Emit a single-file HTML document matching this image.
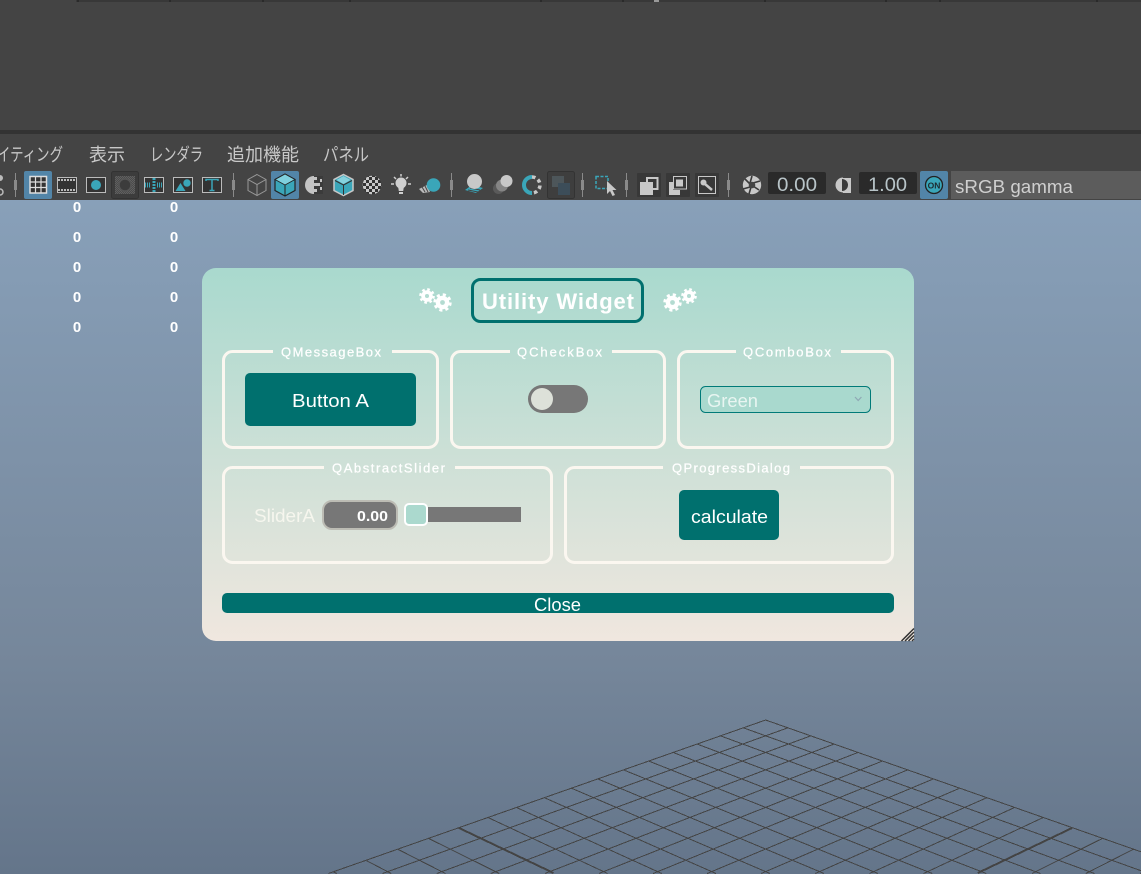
<!DOCTYPE html>
<html lang="ja">
<head>
<meta charset="utf-8">
<title>Utility Widget</title>
<style>
html,body{margin:0;padding:0;width:1141px;height:874px;overflow:hidden;background:#444}
svg{display:block;position:absolute;left:0;top:0}
text{font-family:"Liberation Sans","Noto Sans CJK JP",sans-serif}
</style>
</head>
<body>
<svg width="1141" height="874" viewBox="0 0 1141 874" xmlns="http://www.w3.org/2000/svg">
<defs>
<linearGradient id="vp" gradientUnits="userSpaceOnUse" x1="0" y1="200" x2="0" y2="874">
<stop offset="0" stop-color="#88a0b9"/><stop offset=".67" stop-color="#76879b"/><stop offset="1" stop-color="#64758a"/>
</linearGradient>
<linearGradient id="dlg" gradientUnits="userSpaceOnUse" x1="0" y1="268" x2="0" y2="641">
<stop offset="0" stop-color="#a9d9ce"/><stop offset="1" stop-color="#f0e7df"/>
</linearGradient>
<pattern id="hatch" width="2" height="2" patternUnits="userSpaceOnUse">
<rect width="2" height="2" fill="#4a4a4a"/><rect width="1" height="1" fill="#606060"/><rect x="1" y="1" width="1" height="1" fill="#606060"/>
</pattern>
<pattern id="chk" width="6" height="6" patternUnits="userSpaceOnUse">
<rect width="6" height="6" fill="#c8c8c8"/><rect width="3" height="3" fill="#333"/><rect x="3" y="3" width="3" height="3" fill="#333"/>
</pattern>
<g id="grid-half" fill="none" stroke="#444" stroke-width="1">
<path d="M0 0L-437.2 153.500M22.3 7.800L-383.1 153.500M45 15.900L-328.900 153.500M68.400 24.100L-274.800 153.500M92.300 32.500L-220.700 153.500M116.700 41.100L-166.700 153.500M141.800 50L-112.500 153.500M167.600 59L-58.500 153.500M193.900 68.300L-4.400 153.500M221 77.800L49.700 153.500M248.800 87.600L103.900 153.500M277.200 97.700L158 153.500M336.600 118.600L266.300 153.500M367.500 129.400L320.200 153.500M399.200 140.600L374.400 153.500M431.900 152.100L428.500 153.500"/>
<path d="M306.500 108L212.100 153" stroke-width="2"/>
</g>
<g id="gear">
<circle r="6.800" fill="#fff"/>
<circle r="7.800" fill="none" stroke="#fff" stroke-width="2.800" stroke-dasharray="3.100 3.030"/>
<circle r="2.400" fill="#b3dbd1"/>
</g>
</defs>

<!-- top area -->
<rect width="1141" height="874" fill="#444"/>
<rect x="76" y="0" width="1065" height="2" fill="#383838"/>
<path d="M78 0v2M170 0v2M263 0v2M350 0v2M541 0v2M623 0v2M765 0v2M886 0v2M940 0v2M1097 0v2" stroke="#2a2a2a" stroke-width="2"/>
<rect x="654" y="0" width="5" height="2" fill="#999"/>
<rect x="0" y="130" width="1141" height="4" fill="#333"/>

<!-- menu -->
<g font-size="18" fill="#c8c8c8">
<text x="-3" y="161" textLength="66" lengthAdjust="spacingAndGlyphs">イティング</text>
<text x="89" y="161" textLength="36" lengthAdjust="spacingAndGlyphs">表示</text>
<text x="150" y="161" textLength="53" lengthAdjust="spacingAndGlyphs">レンダラ</text>
<text x="227" y="161" textLength="72" lengthAdjust="spacingAndGlyphs">追加機能</text>
<text x="323" y="161" textLength="46" lengthAdjust="spacingAndGlyphs">パネル</text>
</g>

<!-- viewport -->
<rect x="0" y="200" width="1141" height="674" fill="url(#vp)"/>
<svg x="0" y="200" width="1141" height="674" viewBox="0 200 1141 674">
<g shape-rendering="crispEdges" transform="translate(765.6 720)">
<use href="#grid-half"/>
<use href="#grid-half" transform="scale(-1 1)"/>
</g>
</svg>
<g font-size="15" font-weight="bold" fill="#fff" text-anchor="middle">
<text x="77" y="212">0</text><text x="174" y="212">0</text>
<text x="77" y="242">0</text><text x="174" y="242">0</text>
<text x="77" y="272">0</text><text x="174" y="272">0</text>
<text x="77" y="302">0</text><text x="174" y="302">0</text>
<text x="77" y="332">0</text><text x="174" y="332">0</text>
</g>

<!-- toolbar -->
<g>
<circle cx="0" cy="178" r="3" fill="#bbb"/><circle cx="0" cy="192" r="3" fill="none" stroke="#bbb" stroke-width="1.500"/>
<g fill="#8a8a8a">
<rect x="15" y="173" width="1" height="24"/><rect x="14" y="180" width="3" height="10"/>
<rect x="233" y="173" width="1" height="24"/><rect x="232" y="180" width="3" height="10"/>
<rect x="451" y="173" width="1" height="24"/><rect x="450" y="180" width="3" height="10"/>
<rect x="582" y="173" width="1" height="24"/><rect x="581" y="180" width="3" height="10"/>
<rect x="626" y="173" width="1" height="24"/><rect x="625" y="180" width="3" height="10"/>
<rect x="728" y="173" width="1" height="24"/><rect x="727" y="180" width="3" height="10"/>
</g>
<!-- grid -->
<rect x="24" y="171" width="28" height="28" rx="2" fill="#5285a8"/>
<rect x="30" y="176.500" width="16.500" height="16.500" fill="#333" stroke="#ddd" stroke-width="1.500"/>
<path d="M35.500 177v16M41 177v16M30 182h16M30 187.500h16" stroke="#ddd" stroke-width="1.200"/>
<!-- film -->
<rect x="57.500" y="177.500" width="19" height="15" fill="#333" stroke="#bbb"/>
<path d="M58 180h18M58 190h18" stroke="#bbb" stroke-width="2" stroke-dasharray="2 1"/>
<!-- circle -->
<rect x="86.500" y="177.500" width="19" height="15" fill="#333" stroke="#bbb"/>
<circle cx="96" cy="185" r="5" fill="#3aa6b9"/>
<!-- dark gate -->
<rect x="111.500" y="171.500" width="27" height="27" rx="2" fill="#3c3c3c" stroke="#333"/>
<rect x="115" y="176" width="20" height="18" fill="url(#hatch)"/>
<circle cx="125" cy="185" r="6" fill="#3c3c3c" stroke="#555" stroke-width="1.500"/>
<!-- safe -->
<rect x="144.500" y="177.500" width="19" height="15" fill="#333" stroke="#bbb"/>
<path d="M154 178v14" stroke="#3aa6b9" stroke-width="3" stroke-dasharray="2 1"/>
<path d="M145 185h6M157 185h6" stroke="#3aa6b9" stroke-width="5" stroke-dasharray="1 1"/>
<!-- image -->
<rect x="173.500" y="177.500" width="19" height="15" fill="#333" stroke="#bbb"/>
<path d="M175.500 191l5-8 5 8z" fill="#3aa6b9"/><circle cx="187" cy="183" r="3.700" fill="#3aa6b9"/>
<!-- T -->
<rect x="202.500" y="177.500" width="19" height="15" fill="#333" stroke="#bbb"/>
<path d="M206 181v-1.500h12v1.500M212 179.500v11M209.500 190.500h5" fill="none" stroke="#3aa6b9" stroke-width="1.500"/>
<!-- wire cube -->
<path d="M257 174.500l9 5v11l-9 5-9-5v-11zM248 179.500l9 5 9-5M257 184.500v11" fill="none" stroke="#999" stroke-width="1"/>
<!-- solid cube -->
<rect x="271" y="171" width="28" height="28" rx="2" fill="#5285a8"/>
<path d="M285 174l10 5.500v11l-10 5.500-10-5.500v-11z" fill="#3aa6b9" stroke="#222" stroke-width="1.200"/>
<path d="M285 174l10 5.500-10 5.500-10-5.500z" fill="#7fd0de" stroke="#222" stroke-width=".8"/>
<path d="M285 185v11" stroke="#222" stroke-width="1"/>
<!-- pacman -->
<circle cx="314" cy="185" r="9" fill="#c4c4c4"/>
<path d="M314 176h9v18h-9l0-2h3v-3h-3v-3h3v-3h-3v-3h3v-3h-3z" fill="#3b3b3b"/>
<rect x="317" y="183" width="3" height="3" fill="#c4c4c4"/><rect x="320" y="179" width="2" height="3" fill="#c4c4c4"/><rect x="320" y="187" width="2" height="3" fill="#c4c4c4"/>
<!-- textured cube -->
<path d="M343.500 174.500l9.500 5v11l-9.500 5-9.500-5v-11z" fill="#3aa6b9" stroke="#c8c8c8" stroke-width="1.500"/>
<path d="M343.500 176l7 4-7 4-7-4z" fill="#86d2de"/>
<path d="M343.500 185v10M335 180.500l8.500 4.500 8.500-4.500" stroke="#333" stroke-width="1" fill="none"/>
<!-- checker -->
<circle cx="372" cy="185" r="9.300" fill="url(#chk)"/>
<!-- bulb -->
<circle cx="401" cy="183" r="5.500" fill="#cfcfcf"/><path d="M398 186h6l-.8 5h-4.400z" fill="#cfcfcf"/><rect x="399" y="192" width="4" height="2" fill="#cfcfcf"/>
<path d="M401 174v2.500M394 177l2 2M408 177l-2 2M391 184h3M408 184h3" stroke="#cfcfcf" stroke-width="1.500"/>
<!-- shaded ball -->
<path d="M419 189l8-4 3 7-7 1z" fill="#bbb"/><path d="M422 187l3 5M425 186l3 6" stroke="#444" stroke-width="1"/>
<circle cx="433.500" cy="185" r="6.800" fill="#3aa6b9"/>
<!-- ball water -->
<path d="M465 190l7-5 11 3-7 5z" fill="#3aa6b9"/>
<path d="M468 190l10 2M470 188l10 2" stroke="#444" stroke-width="1"/>
<circle cx="474.500" cy="181.500" r="7.500" fill="#c8c8c8"/>
<!-- overlapping -->
<circle cx="498.500" cy="188.500" r="5.500" fill="#5a5a5a"/><circle cx="502" cy="185.500" r="6" fill="#858585"/><circle cx="506.500" cy="181" r="6" fill="#c8c8c8"/>
<!-- ring -->
<path d="M532 177a8 8 0 0 0 0 16" fill="none" stroke="#3aa6b9" stroke-width="4"/>
<path d="M532 177a8 8 0 0 1 0 16" fill="none" stroke="#c8c8c8" stroke-width="3.500" stroke-dasharray="3.500 3"/>
<!-- dark box -->
<rect x="547.500" y="171.500" width="27" height="27" rx="2" fill="#3e3e3e" stroke="#333"/>
<rect x="552" y="176" width="12" height="11" fill="#4d565a"/><rect x="558" y="183" width="12" height="12" fill="#3c4d59"/>
<!-- select -->
<rect x="596" y="176.500" width="12" height="12" fill="none" stroke="#3aa6b9" stroke-width="1.500" stroke-dasharray="3 1.500"/>
<path d="M607 181v13l3-3 2.500 5 2.500-1-2.500-5h4z" fill="#c8c8c8"/>
<!-- layer icons -->
<rect x="637" y="173" width="24" height="24" rx="1" fill="#383838"/>
<rect x="647" y="178" width="10.500" height="11" fill="none" stroke="#c8c8c8" stroke-width="2"/>
<rect x="640" y="182" width="13" height="13" fill="#c8c8c8"/>
<rect x="666" y="173" width="24" height="24" rx="1" fill="#383838"/>
<rect x="673.500" y="176.500" width="13" height="12.500" fill="none" stroke="#c8c8c8"/><rect x="676" y="179.500" width="7" height="7" fill="#c8c8c8"/><path d="M669 182h4v8h7v5h-11z" fill="#c8c8c8"/>
<rect x="695" y="173" width="24" height="24" rx="1" fill="#383838"/>
<rect x="698.500" y="176.500" width="17" height="17" fill="none" stroke="#c8c8c8"/>
<circle cx="703.500" cy="182.500" r="3" fill="#c8c8c8"/><path d="M705 184l7 6" stroke="#c8c8c8" stroke-width="2.500"/>
<!-- aperture -->
<circle cx="752" cy="185" r="9.200" fill="#c8c8c8"/>
<path d="M752 176l-2 7M760 181l-7 2M759 190l-6-4M749 194l2-7M743 189l7-2M745 179l5 5" stroke="#3a3a3a" stroke-width="1.600"/>
<circle cx="752" cy="185" r="3.300" fill="#444"/>
<!-- field 0.00 -->
<rect x="768" y="172" width="58" height="22" rx="2" fill="#2a2a2a"/>
<text x="777" y="191" font-size="19" fill="#b8c4c8" textLength="40" lengthAdjust="spacingAndGlyphs">0.00</text>
<!-- contrast -->
<path d="M843 177.500a7.500 7.500 0 0 0 0 15z" fill="#c8c8c8"/><rect x="843" y="178" width="8" height="15" fill="#c8c8c8"/><path d="M842 179a6 6 0 0 1 0 12z" fill="#3a3a3a"/>
<!-- field 1.00 -->
<rect x="859" y="172" width="58" height="22" rx="2" fill="#2a2a2a"/>
<text x="868" y="191" font-size="19" fill="#b8c4c8" textLength="39" lengthAdjust="spacingAndGlyphs">1.00</text>
<!-- ON -->
<rect x="920" y="171" width="28" height="28" rx="2" fill="#5285a8"/>
<circle cx="934" cy="185" r="8.500" fill="#3aa6b9" stroke="#222" stroke-width="1.300"/>
<text x="934" y="188.500" font-size="8.500" font-weight="bold" fill="#1d2b30" text-anchor="middle">ON</text>
<!-- colorspace -->
<rect x="951" y="171" width="190" height="28" fill="#5c5c5c"/>
<text x="955" y="193" font-size="18" fill="#cfcfcf" textLength="118" lengthAdjust="spacingAndGlyphs">sRGB gamma</text>
</g>

<!-- dialog -->
<rect x="202" y="268" width="712" height="373" rx="14" fill="url(#dlg)"/>
<path d="M914 627.500V641H901z" fill="#f0e7df"/>
<rect x="472.500" y="279.500" width="170" height="42" rx="8" fill="none" stroke="#00706e" stroke-width="3"/>
<text x="482" y="309" font-size="22" font-weight="bold" fill="#fff" textLength="152" lengthAdjust="spacing">Utility Widget</text>
<use href="#gear" transform="translate(427 296) scale(.85)"/>
<use href="#gear" transform="translate(442.500 302.500)"/>
<use href="#gear" transform="translate(672.500 302.500)"/>
<use href="#gear" transform="translate(689 296) scale(.85)"/>

<!-- groups -->
<g fill="none" stroke="#fbf7f0" stroke-width="3">
<path d="M273 351.500H232.500A9 9 0 0 0 223.500 360.500V438.500A9 9 0 0 0 232.500 447.500H428.500A9 9 0 0 0 437.500 438.500V360.500A9 9 0 0 0 428.500 351.500H392"/>
<path d="M510 351.500H460.500A9 9 0 0 0 451.500 360.500V438.500A9 9 0 0 0 460.500 447.500H655.500A9 9 0 0 0 664.500 438.500V360.500A9 9 0 0 0 655.500 351.500H612"/>
<path d="M736 351.500H687.500A9 9 0 0 0 678.500 360.500V438.500A9 9 0 0 0 687.500 447.500H883.500A9 9 0 0 0 892.500 438.500V360.500A9 9 0 0 0 883.500 351.500H841"/>
<path d="M324 467.500H232.500A9 9 0 0 0 223.500 476.500V553.500A9 9 0 0 0 232.500 562.500H542.500A9 9 0 0 0 551.500 553.500V476.500A9 9 0 0 0 542.500 467.500H455"/>
<path d="M663 467.500H574.500A9 9 0 0 0 565.500 476.500V553.500A9 9 0 0 0 574.500 562.500H883.500A9 9 0 0 0 892.500 553.500V476.500A9 9 0 0 0 883.500 467.500H800"/>
</g>
<g font-size="13" fill="#fff" stroke="#fff" stroke-width=".25">
<text x="281" y="356.500" textLength="100" lengthAdjust="spacing">QMessageBox</text>
<text x="517" y="356.500" textLength="85" lengthAdjust="spacing">QCheckBox</text>
<text x="743" y="356.500" textLength="88" lengthAdjust="spacing">QComboBox</text>
<text x="332" y="472.500" textLength="113" lengthAdjust="spacing">QAbstractSlider</text>
<text x="672" y="472.500" textLength="118" lengthAdjust="spacing">QProgressDialog</text>
</g>

<!-- Button A -->
<rect x="245" y="373" width="171" height="53" rx="5" fill="#00706e"/>
<text x="292" y="407" font-size="18" fill="#fff" textLength="77" lengthAdjust="spacingAndGlyphs">Button A</text>

<!-- toggle -->
<rect x="528" y="385" width="60" height="28" rx="14" fill="#777"/>
<circle cx="542" cy="399" r="11" fill="#dde1d9"/>

<!-- combo -->
<rect x="700.500" y="386.500" width="170" height="26" rx="5" fill="#a9d9ce" stroke="#007a78"/>
<text x="707" y="407" font-size="18" fill="#e8f5f1" textLength="51" lengthAdjust="spacingAndGlyphs">Green</text>
<path d="M855 397l3.200 3.500 3.200-3.500" fill="none" stroke="#8fa8b4" stroke-width="1.200"/>

<!-- slider -->
<text x="254" y="522" font-size="18" fill="#f6f6ee" textLength="61" lengthAdjust="spacingAndGlyphs">SliderA</text>
<rect x="323" y="501" width="74" height="28" rx="9" fill="#777" stroke="#bcbcb4" stroke-width="2"/>
<text x="357" y="521" font-size="15" font-weight="bold" fill="#fff" textLength="31" lengthAdjust="spacingAndGlyphs">0.00</text>
<rect x="428" y="507" width="93" height="15" fill="#777"/>
<rect x="405" y="504" width="22" height="21" rx="4" fill="#abd9ce" stroke="#fff" stroke-width="2"/>

<!-- calculate -->
<rect x="679" y="490" width="100" height="50" rx="5" fill="#00706e"/>
<text x="691" y="523" font-size="18" fill="#fff" textLength="77" lengthAdjust="spacingAndGlyphs">calculate</text>

<!-- close -->
<rect x="222" y="593" width="672" height="20" rx="5" fill="#00706e"/>
<text x="534" y="611" font-size="18" fill="#fff" textLength="47" lengthAdjust="spacingAndGlyphs">Close</text>

<!-- grip -->
<path d="M901.500 641L914 628.500M905 641L914 632M908.500 641L914 635.500M912 641L914 639" stroke="#333" stroke-width="1.500" fill="none"/>
</svg>
</body>
</html>
